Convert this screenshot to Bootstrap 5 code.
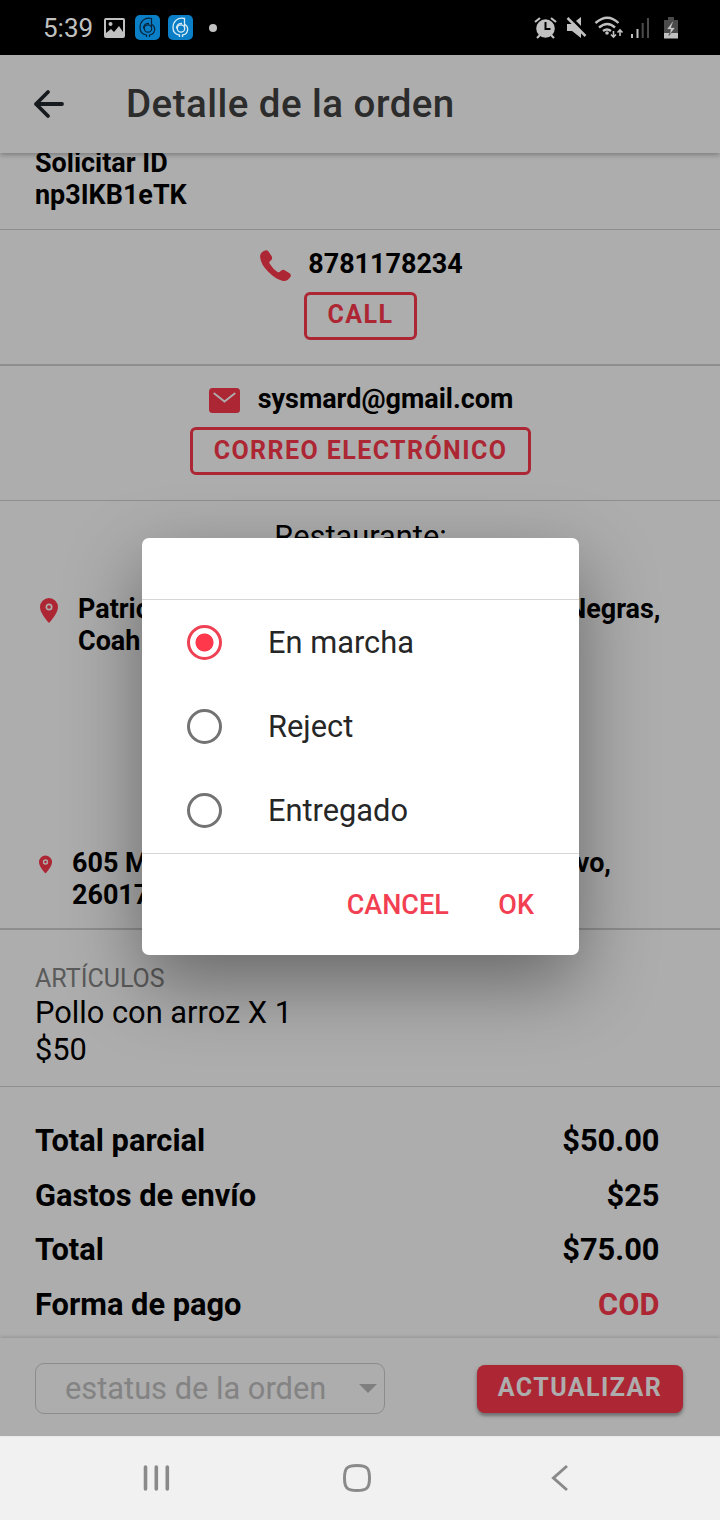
<!DOCTYPE html>
<html lang="es">
<head>
<meta charset="utf-8">
<meta name="viewport" content="width=device-width, initial-scale=1">
<title>Detalle de la orden</title>
<link href="https://cdn.jsdelivr.net/npm/bootstrap@5.3.0/dist/css/bootstrap.min.css" rel="stylesheet">
<style>
  :root { --brand: #ff384c; }
  body { font-family: Roboto, sans-serif; color: #000; background: #f1f1f1; font-size: 30.8px; line-height: 36.6px; }
  .phone { width: 720px; height: 1520px; }
  svg { display: block; flex: none; }
  .statusbar { height: 55px; padding: 0 40px 0 43px; color: #c1c1c1; font-size: 26px; }
  .statusbar .clock { padding-top: 2px; width: 50px; }
  .app { height: 1381px; background: #fff; }
  .topbar { height: 98px; padding-left: 32px; z-index: 2; background: #fff; box-shadow: 0 2px 5px rgba(0,0,0,.28); }
  .topbar h1 { font-size: 38.5px; line-height: 46px; font-weight: 500; letter-spacing: .46px; color: #424242; margin: 0 0 0 62px; }
  .strong { font-size: 26.95px; line-height: 32px; font-weight: 700; }
  .sec { display: flow-root; border-bottom: 1px solid #d2d2d2; }
  .sec.thick { border-bottom-width: 2px; }
  .brand-btn { font-size: 25px; line-height: 32px; font-weight: 700; letter-spacing: 1.42px; height: 48px; border-radius: 6px; padding: 0 20.5px 1px; }
  .brand-line, .brand-line:hover { border: 3px solid var(--brand); color: var(--brand); }
  .brand-solid, .brand-solid:hover { background: var(--brand); color: #fff; border: 0; border-radius: 8px; padding-bottom: 2px; box-shadow: 0 3px 3px rgba(0,0,0,.22), 0 2px 5px rgba(0,0,0,.22); }
  .brand { color: var(--brand); }
  .caption { font-size: 25px; line-height: 32px; color: #868686; }
  .totals { font-weight: 700; padding: 27px 60.5px 0 35px; }
  .totals > div { height: 54.7px; }
  .bottombar { height: 98px; padding: 3px 37px 0 35px; background: #fff; box-shadow: 0 -1px 3px rgba(0,0,0,.16); z-index: 1; }
  .status-select { width: 350px; height: 51px; border: 1px solid #cfcfcf; border-radius: 9px; padding: 0 7.5px 0 29px; color: #c2c2c2; }
  .status-select span { padding-top: 2px; }
  .overlay { background: rgba(0,0,0,.32); z-index: 5; padding: 2px 0 0 1px; }
  .dialog { width: 437px; height: 417px; background: #fff; border-radius: 7px; color: #262626; box-shadow: 0 28px 76px rgba(0,0,0,.4); }
  .dialog-top { height: 62px; border-bottom: 1px solid #d6d6d6; }
  .option { height: 84px; padding-left: 45px; gap: 46px; }
  .option span { padding-top: 2px; }
  .option .form-check-input { width: 35px; height: 35px; margin: 0; border: 3px solid #737373; background: none; box-shadow: none; }
  .option .form-check-input:checked { border-color: #ee4153; background: radial-gradient(circle, var(--brand) 8.6px, transparent 9.4px); }
  .dialog-foot { border-top: 1px solid #d6d6d6; margin-top: 1px; padding-top: 1px; font-size: 27px; font-weight: 500; color: #f23f52; padding-right: 45px; gap: 49.5px; }
  .navkeys { height: 84px; background: #f1f1f1; padding: 0 150px 0 140px; }
  .navkeys .back { margin-left: 9px; }
</style>
</head>
<body>
<div class="phone d-flex flex-column overflow-hidden">

  <div class="statusbar bg-black d-flex align-items-center justify-content-between">
    <div class="d-flex align-items-center">
      <span class="clock">5:39</span>
      <svg width="27" height="22" viewBox="0 0 27 22" style="margin-left:8px"><path fill="#c1c1c1" fill-rule="evenodd" d="M5 1h17q2 0 2 2v16q0 2-2 2H5q-2 0-2-2V3q0-2 2-2zm0 2v13l5-4 3 3 5-6 4 6V3z"/><circle cx="9.500" cy="7" r="2" fill="#c1c1c1"/></svg>
      <svg width="25" height="25" viewBox="0 0 25 25" style="margin-left:7px"><rect width="25" height="25" rx="5" fill="#0a7fc8"/><g fill="none" stroke="#06253c" stroke-width="1.200"><path d="M16.500 12.500V3.500C9 2 5 7 5 12.500c0 4 2.500 7 6.500 7.500v2M14 8.500c-4-.5-5.500 2.500-5.500 5M17 9.500c4.500 3 3 10-2.500 10.500v2"/><circle cx="13" cy="13.500" r="3.700"/></g></svg>
      <svg width="25" height="25" viewBox="0 0 25 25" style="margin-left:8px"><rect width="25" height="25" rx="5" fill="#0a7fc8"/><g fill="none" stroke="#dcecf4" stroke-width="1.300"><path d="M16.500 12.500V3.500C9 2 5 7 5 12.500c0 4 2.500 7 6.500 7.500v2M14 8.500c-4-.5-5.500 2.500-5.500 5M17 9.500c4.500 3 3 10-2.500 10.500v2"/><circle cx="13" cy="13.500" r="3.700"/></g></svg>
      <svg width="8" height="8" viewBox="0 0 8 8" style="margin-left:16px"><circle cx="4" cy="4" r="4" fill="#c1c1c1"/></svg>
    </div>
    <svg width="146" height="24" viewBox="534 16 146 24" fill="none" stroke="#c1c1c1">
      <circle cx="545.500" cy="28.500" r="9.300" fill="#c1c1c1" stroke="none"/>
      <path stroke-width="2.200" d="M535 22l5-4M556 22l-5-4M540 35l-3 3M551 35l3 3"/>
      <path stroke="#000" stroke-width="2" d="M545.500 22v7h5"/>
      <path fill="#c1c1c1" stroke="none" d="M567 24h5l9-7v21l-9-7h-5z"/>
      <path stroke="#000" stroke-width="3" d="M569.500 16.500l18 18"/>
      <path stroke-width="2.500" d="M567.500 18l18 18"/>
      <path stroke-width="2.400" d="M595.500 23q12-10.500 23 0M599 27.500q8.500-7 16 0M603 31q4-3 8 0"/>
      <circle cx="607" cy="33" r="1.800" fill="#c1c1c1" stroke="none"/>
      <path stroke-width="1.600" d="M613.500 31v6M611 34.500l2.500 2.500 2.500-2.500M620 36v-6M617.500 32.500l2.500-2.500 2.500 2.500"/>
      <path stroke-width="2" d="M632 34v4M637.500 29v9"/>
      <path stroke="#4a4a4a" stroke-width="2" d="M642.700 23v15M648 18v20"/>
      <path fill="#4a4a4a" stroke="none" d="M668 17h6v3h4v14h-14V20h4z"/>
      <path fill="#c1c1c1" stroke="none" d="M664 33h14v5.500h-14z"/>
      <path fill="#c8c8c8" stroke="#333" stroke-width=".6" d="M672.500 21.500l-6 8h4l-1.500 6 6.500-8h-4.200l2.200-6z"/>
    </svg>
  </div>

  <div class="app position-relative d-flex flex-column">
    <header class="topbar position-relative d-flex align-items-center flex-shrink-0">
      <svg width="32" height="30" viewBox="0 0 32 30" fill="none" stroke="#23272b" stroke-width="3.800" stroke-linecap="round" stroke-linejoin="round"><path d="M16 3L4 15l12 12M4 15h26"/></svg>
      <h1>Detalle de la orden</h1>
    </header>

    <main class="flex-grow-1 overflow-hidden">
      <section class="sec strong" style="height:77px;padding-left:35px"><div style="margin-top:-6px">Solicitar ID<br>np3IKB1eTK</div></section>

      <section class="sec thick strong d-flex flex-column align-items-center" style="height:136px;padding:18px 0 0 1px">
        <div class="d-flex" style="gap:17px;padding-left:2px">
          <svg width="31" height="32" viewBox="0 0 31 32" style="margin-top:2px"><path fill="#ff384c" d="M5 .6q2-1 3.500.8l3 4.500q1.400 2.400-.2 4l-1.600 1.700q-.7 1 0 2.200 3.300 5.400 7.800 8.200 1.100.7 2 0l1.800-1.400q1.700-1.500 3.800-.2l4.500 2.900q2 1.500.9 3.500-3 5-8.300 4-6.700-1.600-14-9T.2 7.500Q-.6 3 5 .6z"/></svg>
          <span>8781178234</span>
        </div>
        <button type="button" class="btn brand-btn brand-line" style="margin-top:10px;padding-bottom:3px">CALL</button>
      </section>

      <section class="sec strong d-flex flex-column align-items-center" style="height:135px;padding:17px 0 0 1px">
        <div class="d-flex" style="gap:18px;padding-left:1px">
          <svg width="31" height="25" viewBox="0 0 31 25" style="margin-top:5px"><rect width="31" height="25" rx="3.500" fill="#ff384c"/><path fill="none" stroke="#fff" stroke-width="1.900" stroke-linecap="round" d="M5.300 5.600l10.200 8 10.200-8"/></svg>
          <span>sysmard@gmail.com</span>
        </div>
        <button type="button" class="btn brand-btn brand-line" style="margin-top:12px">CORREO ELECTRÓNICO</button>
      </section>

      <section class="sec thick" style="height:429px;padding-top:18px">
        <div class="text-center" style="padding-left:1px">Restaurante:</div>
        <div class="strong d-flex" style="margin:37px 0 0 40px">
          <svg width="18" height="25" viewBox="0 0 18 25" style="margin:5px 20px 0 0"><path fill="#ff384c" d="M9 0a9 9 0 0 1 9 9c0 5.500-5 11-8 15q-1 1.300-2 0C5 20 0 14.500 0 9a9 9 0 0 1 9-9z"/><circle cx="9" cy="9" r="2.700" fill="none" stroke="#fff" stroke-width="1.700"/></svg>
          <div class="d-flex justify-content-between" style="width:582.500px"><span>Patricio<br>Coah</span><span>Negras,</span></div>
        </div>
        <div class="strong d-flex" style="margin:190px 0 0 39px">
          <svg width="13" height="19" viewBox="0 0 18 25" style="margin:8px 20px 0 0"><path fill="#ff384c" d="M9 0a9 9 0 0 1 9 9c0 5.500-5 11-8 15q-1 1.300-2 0C5 20 0 14.500 0 9a9 9 0 0 1 9-9z"/><circle cx="9" cy="9" r="2.700" fill="none" stroke="#fff" stroke-width="2"/></svg>
          <div class="d-flex justify-content-between" style="width:539px"><span>605 M<br>26017</span><span>vo,</span></div>
        </div>
      </section>

      <section class="sec" style="height:157px;padding:33px 0 0 35px">
        <div class="caption">ARTÍCULOS</div>
        <div>Pollo con arroz X 1</div>
        <div>$50</div>
      </section>

      <section class="totals">
        <div class="d-flex align-items-center justify-content-between"><span>Total parcial</span><span>$50.00</span></div>
        <div class="d-flex align-items-center justify-content-between"><span>Gastos de envío</span><span>$25</span></div>
        <div class="d-flex align-items-center justify-content-between"><span>Total</span><span>$75.00</span></div>
        <div class="d-flex align-items-center justify-content-between"><span>Forma de pago</span><span class="brand">COD</span></div>
      </section>
    </main>

    <footer class="bottombar d-flex align-items-center justify-content-between flex-shrink-0">
      <div class="status-select d-flex align-items-center justify-content-between">
        <span>estatus de la orden</span>
        <svg width="18" height="9" viewBox="0 0 18 9"><path fill="#bcbcbc" d="M0 0h18L9 9z"/></svg>
      </div>
      <button type="button" class="btn brand-btn brand-solid" style="width:206px">ACTUALIZAR</button>
    </footer>

    <div class="overlay position-absolute top-0 start-0 w-100 h-100 d-flex align-items-center justify-content-center">
      <div class="dialog d-flex flex-column" role="dialog" aria-modal="true">
        <div class="dialog-top"></div>
        <label class="option d-flex align-items-center"><input class="form-check-input" type="radio" name="st" checked><span>En marcha</span></label>
        <label class="option d-flex align-items-center"><input class="form-check-input" type="radio" name="st"><span>Reject</span></label>
        <label class="option d-flex align-items-center"><input class="form-check-input" type="radio" name="st"><span>Entregado</span></label>
        <div class="dialog-foot flex-grow-1 d-flex align-items-center justify-content-end"><span>CANCEL</span><span>OK</span></div>
      </div>
    </div>
  </div>

  <nav class="navkeys d-flex align-items-center justify-content-between" aria-label="Sistema">
    <svg width="32" height="28" viewBox="0 0 32 28" stroke="#8a8a8a" stroke-width="3.600" stroke-linecap="round"><path d="M5.500 3v22M16.300 3v22M27.300 3v22"/></svg>
    <svg width="30" height="30" viewBox="0 0 30 30" style="margin-left:1px"><path fill="none" stroke="#8a8a8a" stroke-width="3" d="M15 2.500C5 2.500 2.500 5 2.500 15S5 27.500 15 27.500 27.500 25 27.500 15 25 2.500 15 2.500z"/></svg>
    <svg class="back" width="20" height="28" viewBox="0 0 20 28" fill="none" stroke="#8a8a8a" stroke-width="3"><path d="M17 2L3.500 14 17 26"/></svg>
  </nav>
</div>
<script src="https://cdn.jsdelivr.net/npm/bootstrap@5.3.0/dist/js/bootstrap.bundle.min.js"></script>
</body>
</html>
